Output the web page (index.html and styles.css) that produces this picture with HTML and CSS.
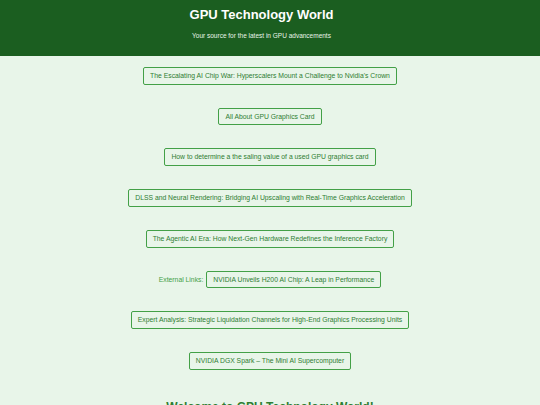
FILE: index.html
```html
<!DOCTYPE html>
<html lang="en">
<head>
<meta charset="utf-8">
<title>GPU Technology World</title>
<link rel="stylesheet" href="styles.css">
</head>
<body>
<header class="site-header">
  <h1 class="site-title">GPU Technology World</h1>
  <p class="site-tagline">Your source for the latest in GPU advancements</p>
</header>
<main class="content">
  <nav class="link-list">
    <div class="link-row"><a class="link-btn" href="#">The Escalating AI Chip War: Hyperscalers Mount a Challenge to Nvidia's Crown</a></div>
    <div class="link-row"><a class="link-btn" href="#">All About GPU Graphics Card</a></div>
    <div class="link-row"><a class="link-btn" href="#">How to determine a the saling value of a used GPU graphics card</a></div>
    <div class="link-row"><a class="link-btn" href="#">DLSS and Neural Rendering: Bridging AI Upscaling with Real-Time Graphics Acceleration</a></div>
    <div class="link-row"><a class="link-btn" href="#">The Agentic AI Era: How Next-Gen Hardware Redefines the Inference Factory</a></div>
    <div class="link-row"><span class="link-label">External Links:</span><a class="link-btn" href="#">NVIDIA Unveils H200 AI Chip: A Leap in Performance</a></div>
    <div class="link-row"><a class="link-btn" href="#">Expert Analysis: Strategic Liquidation Channels for High-End Graphics Processing Units</a></div>
    <div class="link-row"><a class="link-btn" href="#">NVIDIA DGX Spark – The Mini AI Supercomputer</a></div>
  </nav>
  <h2 class="welcome">Welcome to GPU Technology World!</h2>
</main>
</body>
</html>
```
FILE: styles.css
```css
html, body {
  margin: 0;
  padding: 0;
}
body {
  background: #e8f5e9;
  font-family: "Liberation Sans", Arial, sans-serif;
  color: #2e7d32;
  overflow: hidden;
}
.site-header {
  background: #1b5e20;
  color: #ffffff;
  text-align: center;
  padding: 7px 19px 17px 2px;
}
.site-title {
  margin: 0;
  font-size: 13px;
  line-height: 15px;
  font-weight: bold;
}
.site-tagline {
  margin: 9.5px 0 0;
  font-size: 6.5px;
  line-height: 7.5px;
  color: #e8f5e9;
}
.content {
  padding-top: 11px;
}
.link-list {
  display: flex;
  flex-direction: column;
  align-items: center;
  gap: 23px;
}
.link-row {
  display: flex;
  align-items: center;
  gap: 3px;
  font-size: 6.8px;
}
.link-label {
  color: #43a047;
}
.link-btn {
  display: inline-block;
  padding: 4px 6px;
  line-height: 7.7px;
  border: 1px solid #43a047;
  border-radius: 2px;
  color: #2e7d32;
  text-decoration: none;
  white-space: nowrap;
}
.welcome {
  margin: 30px 0 0;
  text-align: center;
  font-size: 12px;
  line-height: 14px;
  font-weight: bold;
  color: #2e7d32;
}
```
